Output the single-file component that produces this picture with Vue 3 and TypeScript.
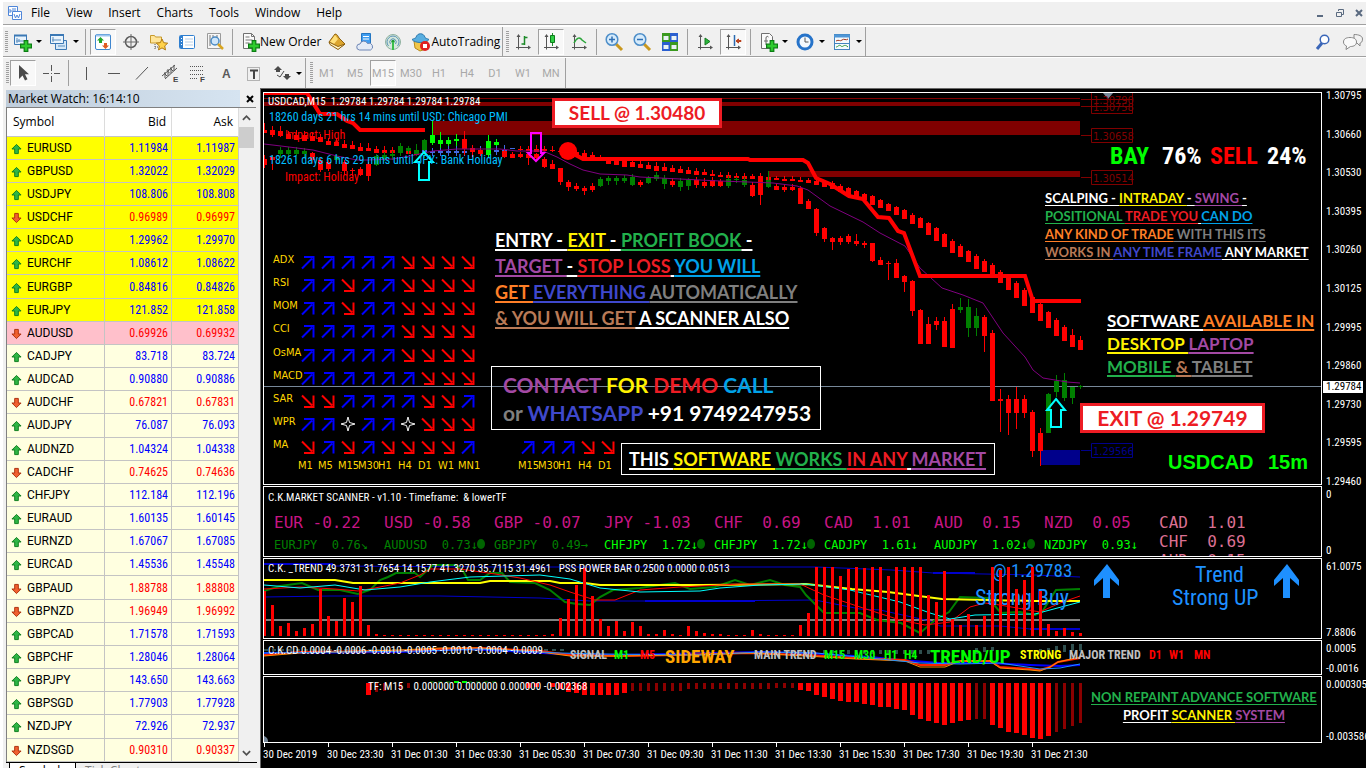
<script setup lang="ts">
type Seg = [string, string]
interface Tool { icon: string; label: string; drop?: boolean; on?: boolean; sep?: boolean; text?: string }

const menus = ['File', 'View', 'Insert', 'Charts', 'Tools', 'Window', 'Help']

const standard: Tool[] = [
  { icon: 'newchart', label: 'New chart', drop: true },
  { icon: 'profiles', label: 'Profiles', drop: true },
  { icon: 'watch', label: 'Market watch', on: true, sep: true },
  { icon: 'target', label: 'Data window' },
  { icon: 'favs', label: 'Navigator' },
  { icon: 'terminal', label: 'Terminal' },
  { icon: 'tester', label: 'Strategy tester' },
  { icon: 'order', label: 'New Order', text: 'New Order', sep: true },
  { icon: 'book', label: 'Editor' },
  { icon: 'cloud', label: 'Cloud' },
  { icon: 'signal', label: 'Signals' },
  { icon: 'auto', label: 'AutoTrading', text: 'AutoTrading' },
]
const charting: Tool[] = [
  { icon: 'bars', label: 'Bar chart' },
  { icon: 'candles', label: 'Candlesticks', on: true },
  { icon: 'line', label: 'Line chart' },
  { icon: 'zoomin', label: 'Zoom in', sep: true },
  { icon: 'zoomout', label: 'Zoom out' },
  { icon: 'tile', label: 'Tile windows' },
  { icon: 'scroll', label: 'Auto scroll', sep: true },
  { icon: 'shift', label: 'Chart shift', on: true },
  { icon: 'indicator', label: 'Indicators', drop: true, sep: true },
  { icon: 'clock', label: 'Periods', drop: true },
  { icon: 'template', label: 'Templates', drop: true },
]
const drawing: Tool[] = [
  { icon: 'cursor', label: 'Cursor', on: true },
  { icon: 'cross', label: 'Crosshair' },
  { icon: 'vline', label: 'Vertical line', sep: true },
  { icon: 'hline', label: 'Horizontal line' },
  { icon: 'trend', label: 'Trendline' },
  { icon: 'channel', label: 'Equidistant channel' },
  { icon: 'fibo', label: 'Fibonacci' },
  { icon: 'text', label: 'Text' },
  { icon: 'label', label: 'Text label' },
  { icon: 'shapes', label: 'Arrows', drop: true },
]
const frames = ['M1', 'M5', 'M15', 'M30', 'H1', 'H4', 'D1', 'W1', 'MN']

const quotes = `EURUSD 1.11984 1.11987 u
GBPUSD 1.32022 1.32029 u
USDJPY 108.806 108.808 u
USDCHF 0.96989 0.96997 d
USDCAD 1.29962 1.29970 u
EURCHF 1.08612 1.08622 u
EURGBP 0.84816 0.84826 u
EURJPY 121.852 121.858 u
AUDUSD 0.69926 0.69932 d
CADJPY 83.718 83.724 u
AUDCAD 0.90880 0.90886 u
AUDCHF 0.67821 0.67831 d
AUDJPY 76.087 76.093 u
AUDNZD 1.04324 1.04338 u
CADCHF 0.74625 0.74636 d
CHFJPY 112.184 112.196 u
EURAUD 1.60135 1.60145 u
EURNZD 1.67067 1.67085 u
EURCAD 1.45536 1.45548 u
GBPAUD 1.88788 1.88808 d
GBPNZD 1.96949 1.96992 d
GBPCAD 1.71578 1.71593 u
GBPCHF 1.28046 1.28064 u
GBPJPY 143.650 143.663 u
GBPSGD 1.77903 1.77928 u
NZDJPY 72.926 72.937 u
NZDSGD 0.90310 0.90337 d`.split('\n').map((r, i) => {
  const [symbol, bid, ask, dir] = r.split(' ')
  return { symbol, bid, ask, dir, tone: i < 8 ? 'hot' : i === 8 ? 'pink' : 'calm' }
})

const X0 = 264
const STEP = 8
const tint: Record<string, string> = { r: '#ff0000', g: '#008000', l: '#00ff00', b: '#4169e1' }

function candles(src: string) {
  return src.trim().split(/\s+/).map((s, k) => {
    const [hi, top, bot, lo] = s.slice(1).split(',').map(Number)
    return { x: X0 + k * STEP, hi, top, bot, lo, fill: tint[s[0]] }
  })
}

const upper = candles(`
r123,130,133,133 r126,130,135,137 r126,131,136,137 r131,134,139,139 r130,135,140,140 r131,135,141,141
r133,136,141,141 r134,137,142,142 r138,141,145,145 r138,142,146,146 r140,144,148,148 r141,145,149,149
r143,147,151,151 r143,148,151,151 r146,149,153,153 r146,150,153,153 r147,150,153,153 r147,150,153,153
r147,151,154,154 r147,151,155,155 b146,150,152,156 b148,151,153,156 b145,151,153,156 b145,151,153,156
b145,151,153,156 b145,151,153,156 b145,151,152,156 b146,151,152,156 b147,151,152,155 b145,150,152,155
b145,150,152,155 b148,148,149,149 r146,149,150,151 r146,149,151,151 r145,149,152,152 r146,149,151,151
r146,150,151,152 r150,151,152,152 r150,151,153,153 r150,152,155,155 r150,153,157,157 r152,155,158,158
r155,157,159,160 r158,160,164,164 r158,161,165,165 r159,161,167,167 r159,162,167,167 r161,164,168,168
r162,165,169,169 r162,166,171,171 r163,167,171,171 r165,168,172,172 r166,169,173,173 r167,170,174,174
r168,171,175,175 r169,172,175,175 r170,174,176,176 r172,175,177,177 r172,175,178,178 r173,176,178,178
r173,176,179,179 r174,176,179,179 r174,176,180,180 r174,177,180,180 r176,178,180,180 r176,179,181,181
r176,179,181,181 r177,180,182,182 r178,180,183,183 r179,181,185,185 r180,182,187,187 r181,183,189,189
r184,186,192,192 r187,188,195,195 r190,191,197,197 r193,194,200,200 r195,196,205,205 r199,200,208,208
r203,204,211,211 r206,207,215,215 r209,210,219,219 r213,215,224,224 r217,218,228,228 r222,223,235,235
r227,228,241,241 r233,234,247,247 r239,241,253,253 r244,246,257,257 r250,251,262,262 r254,256,269,269
r259,261,272,272 r263,265,275,275 r270,272,283,283 r276,277,290,290 r281,283,298,298 r288,290,306,306
r296,297,313,313 r303,304,321,321 r311,312,328,328 r318,320,336,336 r325,327,341,341 r329,335,347,347
r336,340,350,350`)

const lower = candles(`
r155,159,165,168 r155,157,160,170 g147,150,154,158 g147,150,154,157 g147,150,154,156 g148,151,154,158
r152,153,160,163 r158,160,170,172 r160,162,169,171 g155,156,160,162 r160,162,171,175 r168,170,171,176
r167,169,175,176 r162,164,176,181 g154,156,165,166 g152,155,159,161 g151,154,156,160 g143,146,153,156
g146,148,151,154 g144,150,154,156 g139,140,150,158 l120,135,143,145 l132,140,144,148 l137,140,144,146
l134,139,141,146 r131,139,149,155 r145,148,152,157 r148,150,154,156 l135,141,155,157 l139,142,145,146
r150,151,157,158 r152,154,158,158 r152,154,157,158 r152,154,158,165 r153,154,158,160 r157,159,167,168
r160,164,169,169 r168,168,182,185 r180,182,187,191 r183,186,189,191 r186,188,191,195 r183,186,190,192
g177,179,186,187 g176,178,181,185 g176,178,181,185 g175,178,181,183 g174,177,185,186 r180,182,185,187
g176,178,183,184 g172,175,179,181 g175,178,184,189 r178,181,185,187 g178,181,187,191 g178,180,186,190
r177,180,185,188 r178,182,186,188 r177,180,186,187 r179,181,186,187 g176,179,186,188 g177,179,180,183
g177,180,185,187 r182,185,196,197 r173,176,195,205 g171,180,187,188 r184,186,190,190 r184,187,190,192
r184,187,190,191 r186,188,204,204 r199,201,209,209 r208,209,233,236 r227,228,239,242 r237,238,242,250
r236,238,242,245 r234,236,242,244 r234,241,244,246 r241,243,245,248 r243,243,261,262 r257,260,265,265
r261,263,264,280 r259,263,278,278 r275,276,282,292 r280,281,311,316 r309,310,344,344 r317,324,344,344
r317,321,325,330 r317,321,347,347 r304,309,348,348 g298,307,310,313 g299,307,328,337 g308,316,328,336
r315,317,336,352 r330,333,401,401 r389,399,401,432 r395,399,413,435 r387,399,413,429 r395,399,413,418
r410,412,451,457 r428,433,451,466 g393,394,433,433 g375,381,392,397 g373,380,398,401 g387,387,398,404
g385,386,387,389`)

const priceMarks = ['1.30795', '1.30660', '1.30530', '1.30395', '1.30260', '1.30125', '1.29995', '1.29860', '1.29730', '1.29595', '1.29460']
const tags = [
  { y: 92, v: '1.30790', c: '#800000' },
  { y: 99, v: '1.30758', c: '#800000' },
  { y: 128, v: '1.30658', c: '#800000' },
  { y: 170, v: '1.30514', c: '#800000' },
  { y: 443, v: '1.29566', c: '#00008b' },
]
const titles = {
  price: 'USDCAD,M15  1.29784 1.29784 1.29784 1.29784',
  scanner: 'C.K.MARKET SCANNER - v1.10 - Timeframe:  & lowerTF',
  trend: 'C.K. _TREND 49.3731 31.7654 14.1577 41.3270 35.7115 31.4961   PSS POWER BAR 0.2500 0.0000 0.0513',
  cd: 'C.K.CD 0.0004 -0.0006 -0.0010 -0.0005 -0.0010 -0.0004 -0.0009',
  tf: 'TF: M15    0.000000 0.000000 0.000000 -0.002368',
}

const scan = [
  ['ADX', 'uuuuudddd'], ['RSI', 'uuduudddd'], ['MOM', 'uuduudddd'], ['CCI', 'uuuuudddd'], ['OsMA', 'uuuuudddd'],
  ['MACD', 'uuuuuuddd'], ['SAR', 'dduuuuddu'], ['WPR', 'uusuusddd'], ['MA', 'dududdddu'],
].map(([name, cells], i) => ({ name, cells: cells.split(''), y: 262 + Math.round((i * 185) / 8) }))
const scanFrames = ['M1', 'M5', 'M15', 'M30', 'H1', 'H4', 'D1', 'W1', 'MN1']
const miniFrames = [['M15', 'u'], ['M30', 'u'], ['H1', 'u'], ['H4', 'd'], ['D1', 'd']]

const C = { w: '#ffffff', y: '#fff200', g: '#22b14c', p: '#a349a4', r: '#ed1c24', s: '#00a2e8', o: '#ff7f27', b: '#3f48cc', k: '#7f7f7f', n: '#b97a57' }
const entry: Seg[][] = [
  [['ENTRY - ', C.w], ['EXIT ', C.y], ['- ', C.w], ['PROFIT BOOK', C.g], [' -', C.w]],
  [['TARGET ', C.p], ['- ', C.w], ['STOP LOSS', C.r], [' ', C.w], ['YOU WILL', C.s]],
  [['GET ', C.o], ['EVERYTHING ', C.b], ['AUTOMATICALLY', C.k]],
  [['& YOU WILL GET', C.n], [' A SCANNER ALSO', C.w]],
]
const contact: Seg[][] = [
  [['CONTACT ', C.p], ['FOR ', C.y], ['DEMO ', C.r], ['CALL', C.s]],
  [['or ', C.k], ['WHATSAPP ', C.b], ['+91 9749247953', C.w]],
]
const works: Seg[][] = [[['THIS ', C.w], ['SOFTWARE ', C.y], ['WORKS ', C.g], ['IN ANY', C.r], [' ', C.w], ['MARKET', C.p]]]
const scalping: Seg[][] = [
  [['SCALPING - ', C.w], ['INTRADAY ', C.y], ['- ', C.w], ['SWING ', C.p], ['-', C.w]],
  [['POSITIONAL ', C.g], ['TRADE YOU', C.r], [' ', C.w], ['CAN DO', C.s]],
  [['ANY KIND OF TRADE', C.o], [' WITH THIS ITS', C.k]],
  [['WORKS IN ', C.n], ['ANY TIME FRAME', C.b], [' ANY MARKET', C.w]],
]
const devices: Seg[][] = [
  [['SOFTWARE ', C.w], ['AVAILABLE IN', C.o]],
  [['DESKTOP ', C.y], ['LAPTOP', C.p]],
  [['MOBILE ', C.g], ['& ', C.n], ['TABLET', C.k]],
]
const advance: Seg[][] = [
  [['NON REPAINT ADVANCE SOFTWARE', C.g]],
  [['PROFIT ', C.w], ['SCANNER ', C.y], ['SYSTEM', C.p]],
]

const strength = [
  ['EUR -0.22', 'EURJPY  0.76↘', 0, 0], ['USD -0.58', 'AUDUSD  0.73↓', 0, 1], ['GBP -0.07', 'GBPJPY  0.49→', 0, 0],
  ['JPY -1.03', 'CHFJPY  1.72↓', 1, 1], ['CHF  0.69', 'CHFJPY  1.72↓', 1, 1], ['CAD  1.01', 'CADJPY  1.61↓', 1, 0],
  ['AUD  0.15', 'AUDJPY  1.02↓', 1, 1], ['NZD  0.05', 'NZDJPY  0.93↓', 1, 0],
].map(([a, b, on, dot], i) => ({ a, b, on, dot, x: 274 + i * 110 }))
const ranking = ['CAD  1.01', 'CHF  0.69', 'AUD  0.15']

const power = [
  591, 605, 626, 623, 631, 628, 624, 589, 616, 621, 598, 602, 586, 625, 634, 635, 635, 635, 635, 635, 635, 635, 635,
  635, 635, 635, 635, 635, 635, 635, 635, 635, 635, 635, 635, 635, 634, 618, 599, 585, 568, 596, 619, 626, 621, 631,
  622, 626, 634, 634, 630, 634, 635, 626, 631, 633, 634, 634, 635, 635, 635, 630, 634, 635, 635, 635, 635, 625, 613,
  567, 567, 567, 576, 569, 567, 568, 567, 567, 576, 567, 567, 567, 567, 595, 602, 571, 619, 625, 614, 625, 616, 567,
  570, 567, 589, 580, 567, 591, 624, 631, 628, 632, 633,
].map((top, k) => ({ x: X0 + k * STEP, top }))

const momentum = [
  ...Array.from({ length: 21 }, (_, i) => [46 + i, i < 7 ? 691 : i < 18 ? 689 : 688, 0]),
  [13, 695, 1], [14, 692, 0], [15, 691, 0], [17, 690, 0], [18, 688, 0], [33, 688, 1], [34, 687, 1], [36, 687, 1], [37, 689, 1],
  [38, 692, 1], [39, 693, 1], [40, 695, 1], [41, 695, 1], [42, 695, 1], [43, 695, 1], [44, 695, 1], [45, 693, 1], [67, 690, 1], [68, 691, 1],
  ...[695, 697, 699, 701, 702, 702, 704, 705, 707, 707, 709, 710, 715, 719, 721, 723, 725, 723, 721, 720, 719, 719, 725,
    728, 732, 733, 735, 738, 739, 736, 732, 729, 726, 723].map((b, i) => [69 + i, b, [89, 90, 99, 100, 101, 102].includes(69 + i) ? 0 : 1]),
].map(([k, b, on]) => ({ x: X0 + k * STEP, b, on }))

const slate = [66, 68, 70, 71, 72, 73, 74, 75, 76, 77, 78, 79, 80, 81, 82, 83].map(k => ({ x: X0 + k * STEP, y: 650, h: 4 }))
  .concat([[89, 648, 6], [90, 647, 5], [91, 647, 4], [97, 649, 4], [98, 648, 4], [99, 646, 6], [100, 645, 7], [101, 644, 7], [102, 644, 7]]
    .map(([k, y, h]) => ({ x: X0 + k * STEP, y, h })))

const signals: [string, number, string][] = [
  ['SIGNAL', 570, '#c0c0c0'], ['M1', 614, '#00ff00'], ['M5', 640, '#ff0000'], ['MAIN TREND', 754, '#c0c0c0'],
  ['M15', 824, '#00ff00'], ['M30', 854, '#00ff00'], ['H1', 884, '#00ff00'], ['H4', 904, '#00ff00'], ['STRONG', 1020, '#ffff00'],
  ['MAJOR TREND', 1069, '#c0c0c0'], ['D1', 1149, '#ff0000'], ['W1', 1169, '#ff0000'], ['MN', 1194, '#ff0000'],
]
const dates = ['30 Dec 2019', '30 Dec 23:30', ...Array.from({ length: 11 }, (_, i) => `31 Dec ${String(i * 2 + 1).padStart(2, '0')}:30`)]
</script>

<template>
  <svg class="defs" aria-hidden="true">
    <defs>
      <symbol id="i-plus" viewBox="0 0 10 10"><path d="M3.500 .5h3v3h3v3h-3v3h-3v-3h-3v-3h3z" fill="#2ecc2e" stroke="#0a7d12" /></symbol>
      <symbol id="i-newchart" viewBox="0 0 20 20"><path d="M2.500 3.500h12v9h-12z" fill="#e8f3fc" stroke="#3b78b5" /><path d="M2 3.500h13" stroke="#3b78b5" stroke-width="2" /><path d="M5 6v5M4 9h8M7 7v3" stroke="#5a8dbd" fill="none" /><use href="#i-plus" x="8" y="8" width="12" height="12" /></symbol>
      <symbol id="i-profiles" viewBox="0 0 20 20"><path d="M6.500 8.500h11v9h-11z" fill="#d5e8f8" stroke="#3b78b5" /><path d="M1.500 2.500h13v9h-13z" fill="#eaf4fc" stroke="#3b78b5" /><path d="M1 3h14" stroke="#3b78b5" stroke-width="2" /><path d="M4 5v5M3 8h9M9 14h7" stroke="#5a8dbd" /></symbol>
      <symbol id="i-watch" viewBox="0 0 20 20"><rect x="2.500" y="2.500" width="15" height="15" rx="1.500" fill="#fff" stroke="#3f86cf" /><path d="M3 3.500h14" stroke="#9cc6ee" stroke-width="2" /><path d="M7.500 5l3.500 3.500H9V11H6V8.500H4z" fill="#22a52c" /><path d="M12.500 17L9 13.500h2V11h3v2.500h2z" fill="#e05a22" /></symbol>
      <symbol id="i-target" viewBox="0 0 20 20"><circle cx="10" cy="10" r="5.500" fill="none" stroke="#5a5a5a" stroke-width="1.500" /><path d="M10 2v16M2 10h16" stroke="#6a6a6a" /></symbol>
      <symbol id="i-favs" viewBox="0 0 20 20"><path d="M1.500 3.500h4l1 1.500h6v6h-11z" fill="#ffe59a" stroke="#c79a2c" /><path d="M6 12v6M6 15h4" stroke="#555" stroke-dasharray="1 1" /><path d="M13 7l1.700 3.700 4 .5-3 2.700.8 4-3.500-2-3.500 2 .8-4-3-2.700 4-.5z" fill="#ffd24a" stroke="#b07a12" /></symbol>
      <symbol id="i-terminal" viewBox="0 0 20 20"><rect x="2.500" y="3.500" width="15" height="13" rx="1" fill="#fff" stroke="#2f7fd0" /><path d="M3 4v12h3V4z" fill="#2f7fd0" /><path d="M8 7h8M8 10h8M8 13h8" stroke="#b9cfe6" /><path d="M4.500 6v1M4.500 9v1M4.500 12v1" stroke="#fff" /></symbol>
      <symbol id="i-tester" viewBox="0 0 20 20"><path d="M2.500 1.500h13v15h-13z" fill="#f6f6f6" stroke="#9a9a9a" /><path d="M5 3v11M8 3v6M12 3v4" stroke="#777" /><circle cx="10" cy="9" r="4" fill="#cfe6fa" stroke="#4a8ac4" stroke-width="1.500" /><path d="M13 12l5 5" stroke="#d9a520" stroke-width="2.500" /></symbol>
      <symbol id="i-order" viewBox="0 0 20 20"><path d="M3.500 1.500h8l3 3v12h-11z" fill="#fafafa" stroke="#707070" /><path d="M11.500 1.500v3h3M5.500 5h4M5.500 8h7M5.500 11h4" stroke="#777" fill="none" /><use href="#i-plus" x="8" y="8" width="12" height="12" /></symbol>
      <symbol id="i-book" viewBox="0 0 20 20"><path d="M2 10l6-8c2 0 3 2 4 4l6 6-7 5z" fill="#dca52e" stroke="#8f6210" /><path d="M3 10l5-7c1 1 2 3 3 4l-4 5z" fill="#ffe07a" /><path d="M2 10l1 2.500 8 5 7-5.500-7 2.500z" fill="#fff3c4" stroke="#8f6210" /></symbol>
      <symbol id="i-cloud" viewBox="0 0 20 20"><path d="M6.500 1.500h9v11h-9z" fill="#3f9df0" stroke="#2476c2" /><path d="M8 4.500h6M8 7h6" stroke="#fff" /><path d="M4.500 18a3 3 0 0 1 .5-6 4 4 0 0 1 7.500-.5 3.300 3.300 0 0 1 3 6.500z" fill="#e4ebf6" stroke="#6e86b5" /></symbol>
      <symbol id="i-signal" viewBox="0 0 20 20"><circle cx="10" cy="10" r="7.500" fill="#d6e8dc" stroke="#8fb1a0" /><path d="M5.500 14a6 6 0 1 1 9 0M7.500 12a3.200 3.200 0 1 1 5 0" fill="none" stroke="#5b93b8" /><circle cx="10" cy="9.500" r="1.700" fill="#1f9a35" /><path d="M10 10v8" stroke="#3bbf4b" stroke-width="2" /></symbol>
      <symbol id="i-auto" viewBox="0 0 20 20"><path d="M3 9h13l-1 8-6 2-5-3z" fill="#f2c648" stroke="#b98a1c" /><path d="M1 7.500c2-1 3-1 4-2 1-5 8-5 9 0 1 1 2 1 4 2-3 4-14 4-17 0z" fill="#58aee0" stroke="#2b78ad" /><circle cx="14" cy="14" r="5" fill="#e02020" /><rect x="12" y="12" width="4" height="4" fill="#fff" /></symbol>
      <symbol id="i-axes" viewBox="0 0 20 20"><path d="M5.500 3v14.500M3 15.500h14" stroke="#555" fill="none" /><path d="M5.500 2l-2 3h4zM18 15.500l-3-2v4z" fill="#555" /></symbol>
      <symbol id="i-bars" viewBox="0 0 20 20"><use href="#i-axes" /><path d="M11.500 4v9M11.500 5.500h3M8.500 12h3" stroke="#1c8a28" stroke-width="1.500" /></symbol>
      <symbol id="i-candles" viewBox="0 0 20 20"><use href="#i-axes" /><path d="M11.500 1v13" stroke="#1c8a28" /><path d="M9.500 3.500h4v7h-4z" fill="#2fd045" stroke="#0e7a1b" /></symbol>
      <symbol id="i-line" viewBox="0 0 20 20"><use href="#i-axes" /><path d="M5 11c3-6 6-6 8-3l4 3" fill="none" stroke="#2ba53a" stroke-width="1.500" /></symbol>
      <symbol id="i-lens" viewBox="0 0 20 20"><path d="M12 12l6 6" stroke="#c9981e" stroke-width="3" /><circle cx="8" cy="7.500" r="5.800" fill="#d6ebfb" stroke="#4e8ec9" stroke-width="1.500" /></symbol>
      <symbol id="i-zoomin" viewBox="0 0 20 20"><use href="#i-lens" /><path d="M8 4.500v6M5 7.500h6" stroke="#2f6fb4" stroke-width="1.500" /></symbol>
      <symbol id="i-zoomout" viewBox="0 0 20 20"><use href="#i-lens" /><path d="M5 7.500h6" stroke="#2f6fb4" stroke-width="1.500" /></symbol>
      <symbol id="i-tile" viewBox="0 0 20 20"><path d="M2 1h8v9H2zM10 10h8v9h-8z" fill="#3a9a1e" /><path d="M10 1h8v9h-8zM2 10h8v9H2z" fill="#2a5fd0" /><path d="M3.500 4h5v4h-5zM11.500 4h5v4h-5zM3.500 13h5v4h-5zM11.500 13h5v4h-5z" fill="#e9f2f4" /></symbol>
      <symbol id="i-scroll" viewBox="0 0 20 20"><use href="#i-axes" /><path d="M10 6l5 3.500-5 3.500z" fill="#2bb53b" stroke="#167a22" /></symbol>
      <symbol id="i-shift" viewBox="0 0 20 20"><use href="#i-axes" /><path d="M11.500 3v11" stroke="#2b6ab0" stroke-width="1.500" /><path d="M13 9l2.500-2v1.500H18v1h-2.500V11z" fill="#b8401c" stroke="#b8401c" /></symbol>
      <symbol id="i-indicator" viewBox="0 0 20 20"><path d="M3.500 1.500h8l3 3v12h-11z" fill="#fafafa" stroke="#707070" /><path d="M8 13V6c0-2 2-2 2.500-1M6 9h4" stroke="#666" fill="none" /><use href="#i-plus" x="8" y="8" width="12" height="12" /></symbol>
      <symbol id="i-clock" viewBox="0 0 20 20"><circle cx="10" cy="10" r="7" fill="#f3f8fd" stroke="#2673c9" stroke-width="3" /><path d="M10 5.500V10h3.500" stroke="#555" fill="none" /></symbol>
      <symbol id="i-template" viewBox="0 0 20 20"><rect x="2.500" y="2.500" width="15" height="15" fill="#f5fafd" stroke="#4384bd" /><path d="M2 4h16" stroke="#4f96d6" stroke-width="3" /><path d="M4 9c3-2 4 1 6-1s4 1 6-1" stroke="#a0351c" fill="none" /><path d="M4 15c2 0 3-3 5-1s3-3 7 1" stroke="#2a9a35" fill="none" /><path d="M3 11.500h14" stroke="#4384bd" /></symbol>
      <symbol id="i-cursor" viewBox="0 0 20 20"><path d="M6 2v14l3.500-3.500 2.500 5 2.500-1.200-2.500-5H16z" fill="#4a4a4a" /></symbol>
      <symbol id="i-cross" viewBox="0 0 20 20"><path d="M10.500 2v6M10.500 13v6M2 10.500h6M13 10.500h6" stroke="#555" /><path d="M10 10h1v1h-1z" fill="#555" /></symbol>
      <symbol id="i-vline" viewBox="0 0 20 20"><path d="M10.500 4v13" stroke="#555" /></symbol>
      <symbol id="i-hline" viewBox="0 0 20 20"><path d="M4 10.500h12" stroke="#555" /></symbol>
      <symbol id="i-trend" viewBox="0 0 20 20"><path d="M4 16.500L16 4" stroke="#555" /></symbol>
      <symbol id="i-channel" viewBox="0 0 20 20"><path d="M2 13L15 2M5 16L17 5M4 10l3 3M7 7.500l3 3M10 5l3 3M5 9v6M8 6v7M11 4v6M14 2v6" stroke="#555" /><text x="13" y="19" font-size="8" font-weight="700" fill="#444">E</text></symbol>
      <symbol id="i-fibo" viewBox="0 0 20 20"><path d="M2 3.500h14M2 7.500h14M2 11.500h14M2 15.500h8" stroke="#555" stroke-dasharray="1 1" /><text x="12" y="19" font-size="8" font-weight="700" fill="#444">F</text></symbol>
      <symbol id="i-text" viewBox="0 0 20 20"><text x="6" y="15" font-size="12" font-weight="700" fill="#5a5a5a">A</text></symbol>
      <symbol id="i-label" viewBox="0 0 20 20"><rect x="3.500" y="4.500" width="12" height="13" fill="none" stroke="#777" stroke-dasharray="1 1" /><path d="M6 7.500h8M10 7.500V16" stroke="#444" stroke-width="2" /></symbol>
      <symbol id="i-shapes" viewBox="0 0 20 20"><path d="M6 3l4 4H8v2H4V7H2zM15 17l-4-4h2v-2h4v2h2z" fill="#4a4a4a" /><path d="M5 12l3 2 4-6" stroke="#4a4a4a" fill="none" /></symbol>
      <symbol id="i-up" viewBox="0 0 12 12"><path d="M6 1l5 5H8v5H4V6H1z" fill="#2fb545" stroke="#0a7a1a" /></symbol>
      <symbol id="i-down" viewBox="0 0 12 12"><path d="M6 11L1 6h3V1h4v5h3z" fill="#f06030" stroke="#a82a08" /></symbol>
      <symbol id="a-u" viewBox="0 0 14 14"><path d="M1 13L11 3M3 1.500h9.500V13" fill="none" stroke="#0000ff" stroke-width="2" /></symbol>
      <symbol id="a-d" viewBox="0 0 14 14"><path d="M1 1L11 11M3 12.500h9.500V1" fill="none" stroke="#ff0000" stroke-width="2" /></symbol>
      <symbol id="a-s" viewBox="0 0 16 16"><path d="M8 1l1.500 5.500L15 8l-5.500 1.500L8 15l-1.500-5.500L1 8l5.500-1.500z" fill="#000" stroke="#f5f5f5" /></symbol>
    </defs>
  </svg>

  <div class="terminal">
    <header>
      <nav class="menubar">
        <svg class="logo" viewBox="0 0 16 16"><path d="M1.500 1.500h9v9h-9z" fill="#fff" stroke="#4f86d9" /><path d="M5.500 6.500h9v8h-9z" fill="#fff" stroke="#4f86d9" /><path d="M3 4v4M3 6h2M6 3v3M8 3v3M7 9l1.500 4L10 10l1.500 3L13 9" fill="none" stroke="#4f86d9" /></svg>
        <button v-for="m in menus" :key="m" type="button">{{ m }}</button>
        <span class="winctl">
          <button type="button" aria-label="Minimize"><svg viewBox="0 0 10 10"><path d="M1 8h6" stroke="#5a6a80" stroke-width="2" /></svg></button>
          <button type="button" aria-label="Restore"><svg viewBox="0 0 10 10"><path d="M3.500 3V1.500h5v5H7M1.500 4.500h5v4h-5z" fill="none" stroke="#5a6a80" /></svg></button>
          <button type="button" aria-label="Close"><svg viewBox="0 0 10 10"><path d="M2 2l6 6M8 2L2 8" stroke="#5a6a80" stroke-width="2" /></svg></button>
        </span>
      </nav>

      <div class="bars">
        <div v-for="(bar, b) in [standard, charting]" :key="b" class="bar">
          <i class="grip" />
          <template v-for="t in bar" :key="t.icon">
            <i v-if="t.sep" class="sep" />
            <button type="button" class="tool" :class="{ on: t.on, drop: t.drop, wide: t.text }" :aria-label="t.label">
              <svg class="ico"><use :href="'#i-' + t.icon" /></svg>
              <span v-if="t.text">{{ t.text }}</span>
              <i v-if="t.drop" class="caret" />
            </button>
          </template>
        </div>
        <div class="far">
          <svg viewBox="0 0 18 18"><path d="M8 10l-5 6" stroke="#3a66b8" stroke-width="3" /><circle cx="10.500" cy="6.500" r="4.300" fill="#fff" stroke="#3a66b8" stroke-width="1.500" /></svg>
          <svg viewBox="0 0 22 18"><path d="M12 1.500c5 0 8.500 1.500 8.500 4.500S19 10 18 10v3l-3-3H12z" fill="#f2f2f2" stroke="#888" /><path d="M8 4.500c4 0 6.500 1.500 6.500 4.500s-2.500 4.500-6 4.500L4 16.500l.5-3.500C2.500 12 1.500 11 1.500 9c0-3 2.500-4.500 6.500-4.500z" fill="#fafafa" stroke="#888" /></svg>
        </div>
      </div>

      <div class="bars second">
        <div class="bar">
          <i class="grip" />
          <template v-for="t in drawing" :key="t.icon">
            <i v-if="t.sep" class="sep" />
            <button type="button" class="tool" :class="{ on: t.on, drop: t.drop }" :aria-label="t.label">
              <svg class="ico"><use :href="'#i-' + t.icon" /></svg>
              <i v-if="t.drop" class="caret" />
            </button>
          </template>
        </div>
        <div class="bar">
          <i class="grip" />
          <button v-for="f in frames" :key="f" type="button" class="tool frame" :class="{ on: f === 'M15' }">{{ f }}</button>
        </div>
      </div>
    </header>

    <main>
      <aside class="watch">
        <div class="title"><span>Market Watch: 16:14:10</span><button type="button" aria-label="Close panel"><svg viewBox="0 0 8 8"><path d="M1 1l6 6M7 1L1 7" stroke="#000" stroke-width="2" /></svg></button></div>
        <div class="list">
          <table>
            <thead><tr><th class="sym">Symbol</th><th>Bid</th><th>Ask</th></tr></thead>
            <tbody>
              <tr v-for="q in quotes" :key="q.symbol" :class="[q.tone, q.dir]">
                <td class="sym"><svg class="dir"><use :href="q.dir === 'u' ? '#i-up' : '#i-down'" /></svg>{{ q.symbol }}</td>
                <td>{{ q.bid }}</td>
                <td>{{ q.ask }}</td>
              </tr>
            </tbody>
          </table>
          <div class="scroll">
            <svg viewBox="0 0 10 8"><path d="M1 6l4-4 4 4" fill="none" stroke="#505050" stroke-width="2" /></svg>
            <i class="thumb" />
            <svg class="end" viewBox="0 0 10 8"><path d="M1 2l4 4 4-4" fill="none" stroke="#505050" stroke-width="2" /></svg>
          </div>
        </div>
        <div class="tabs"><button type="button" class="act">Symbols</button><button type="button">Tick Chart</button></div>
      </aside>

      <section class="chart">
        <div class="pane price">
          <div class="plot">
            <svg width="1057" height="391" viewBox="264 93 1057 391">
              <g fill="#800000">
                <rect x="264" y="98" width="816" height="1" /><rect x="264" y="102" width="816" height="4" />
                <rect x="432" y="121" width="648" height="14" /><rect x="769" y="171" width="311" height="6" />
              </g>
              <rect x="1041" y="450" width="39" height="15" fill="#00008b" />
              <rect x="264" y="386" width="1057" height="1" fill="#778899" />
              <g v-for="(set, s) in [upper, lower]" :key="s" shape-rendering="crispEdges">
                <g v-for="c in set" :key="c.x" :fill="c.fill">
                  <rect :x="c.x" :y="c.hi" width="1" :height="c.lo - c.hi" />
                  <rect :x="c.x - 2" :y="c.top" width="5" :height="Math.max(1, c.bot - c.top)" />
                </g>
              </g>
              <polyline points="264,144 281,146 297,148 313,150 337,156 357,160 367,160 393,159 410,156 433,151 457,149 500,149 517,151 543,151 557,157 570,164 583,170 600,174 627,175 640,177 720,181 748,182 773,183 797,186 808,190 830,206 863,222 880,233 905,246 920,268 942,288 963,295 983,303 1003,333 1025,357 1033,370 1043,378 1067,382 1080,383" class="ma" />
              <g class="trail">
                <polyline points="264,93 307,93 320,114 337,114 347,121 353,123 360,130 425,130" />
                <polyline points="568,151 583,159 748,159 750,160 803,160 808,163 816,178 830,184 849,196 863,199 878,217 889,218 898,231 904,233 920,276 1025,276 1033,301 1081,301" />
              </g>
              <circle cx="568" cy="151" r="9" fill="#ff0000" />
              <g fill="none" stroke="#00ffff" stroke-width="2">
                <path d="M424 152l9 10h-4v18h-10v-18h-4z" /><path d="M1056 399l9 11h-4v17h-10v-17h-4z" />
              </g>
              <path d="M531 133h10v20h3l-8 8-8-8h3z" fill="none" stroke="#ff00ff" stroke-width="2" />
              <path d="M1103 93h10l-5 6z" fill="#778899" />
              <g v-for="t in tags" :key="t.v">
                <path :d="`M1081 ${t.y + 7}.5h10M1091.500 ${t.y}.500h41v14h-41z`" fill="none" :stroke="t.c" />
                <text class="tag" x="1093" :y="t.y + 12" :fill="t.c">{{ t.v }}</text>
              </g>
              <text class="cap" x="268" y="105">{{ titles.price }}</text>
              <g class="news">
                <text x="269" y="121" fill="#00bfff">18260 days 21 hrs 14 mins until USD: Chicago PMI</text>
                <text x="285" y="139" fill="#ff0000">Impact: High</text>
                <text x="269" y="164" fill="#00bfff">18261 days 6 hrs 29 mins until JPY: Bank Holiday</text>
                <text x="285" y="181" fill="#ff0000">Impact: Holiday</text>
              </g>
              <g v-for="row in scan" :key="row.name">
                <text class="scan" x="273" :y="row.y + 1">{{ row.name }}</text>
                <use v-for="(c, i) in row.cells" :key="i" :href="'#a-' + c" :x="(c === 's' ? 340 : 301) + (c === 's' ? (i - 2) * 20 : i * 20)" :y="row.y - (c === 's' ? 8 : 7)" :width="c === 's' ? 16 : 14" :height="c === 's' ? 16 : 15" />
              </g>
              <text v-for="(f, i) in scanFrames" :key="f" class="scan" :x="298 + i * 20" y="469">{{ f }}</text>
              <g v-for="([f, d], i) in miniFrames" :key="f">
                <use :href="'#a-' + d" :x="521 + i * 20" y="440" width="14" height="15" />
                <text class="scan" :x="518 + i * 20" y="469">{{ f }}</text>
              </g>
              <g class="ratio">
                <text x="1110" y="164" fill="#00ff00">BAY</text><text x="1162" y="164" fill="#fff">76%</text>
                <text x="1210" y="164" fill="#ff0000">SELL</text><text x="1267" y="164" fill="#fff">24%</text>
              </g>
              <g class="pair"><text x="1168" y="469">USDCAD</text><text x="1268" y="469">15m</text></g>
            </svg>
            <div class="stamp sell">SELL @ 1.30480</div>
            <div class="stamp exit">EXIT @ 1.29749</div>
            <div v-for="(block, n) in { entry, contact, works, scalping, devices }" :key="n" class="note" :class="n">
              <p v-for="(line, i) in block" :key="i"><span v-for="(s, j) in line" :key="j" :style="{ color: s[1] }">{{ s[0] }}</span></p>
            </div>
          </div>
          <div class="axis"><span v-for="p in priceMarks" :key="p">{{ p }}</span><b>1.29784</b></div>
        </div>

        <div class="pane scanner">
          <div class="plot">
            <svg width="1057" height="69" viewBox="264 487 1057 69">
              <text class="cap" x="268" y="501">{{ titles.scanner }}</text>
              <g v-for="s in strength" :key="s.x" class="mono">
                <text :x="s.x" y="528" font-size="16" fill="#c71585">{{ s.a }}</text>
                <text :x="s.x" y="549" font-size="12" :fill="s.on ? '#00ff00' : '#008000'">{{ s.b }}</text>
                <ellipse v-if="s.dot" :cx="s.x + 97" cy="544" rx="4" ry="5" fill="#006400" />
              </g>
              <text v-for="(r, i) in ranking" :key="r" class="mono" x="1159" :y="528 + i * 19" font-size="16" fill="#db7093">{{ r }}</text>
            </svg>
          </div>
          <div class="axis"><span>0</span><span>0</span></div>
        </div>

        <div class="pane trend">
          <div class="plot">
            <svg width="1057" height="79" viewBox="264 559 1057 79">
              <rect x="264" y="619" width="816" height="2" fill="#808080" />
              <g class="curve">
                <polyline stroke="#0000cd" points="264,564 333,564 333,566 500,567 816,567 892,570 933,573 1035,575 1080,577" />
                <polyline stroke="#0000cd" points="264,597 330,596 440,596 540,598 590,601 700,601 815,600 830,603 860,609 880,610 930,621 940,626 1000,626 1030,629 1080,629" />
                <polyline class="thick" stroke="#0000cd" points="264,564 333,564" />
                <polyline class="thick" stroke="#0000cd" points="933,573 975,573" />
                <polyline class="thick" stroke="#0000cd" points="645,601 755,601" />
                <polyline class="thick" stroke="#0000cd" points="1030,629 1080,629" />
                <polyline class="thick" stroke="#008000" points="264,591 280,586 302,583 318,590 340,590 358,594 370,590 380,580 388,577 396,573 415,573 420,577 433,565 455,565 463,571 468,580 480,580 490,573 502,573 510,582 535,583 550,590 565,602 577,604 590,605 600,597 613,590 640,588 660,585 675,583 690,589 715,587 735,580 750,585 770,580 785,585 800,587 806,595 824,613 860,613 877,620 901,623 920,633 935,620 949,612 960,597 988,598 1001,613 1020,612 1035,615 1042,612 1056,590 1080,589" />
                <polyline class="thick" stroke="#ffff00" points="264,580 335,580 353,583 480,583 490,581 550,581 560,583 585,583 600,585 700,585 806,584 852,589 888,592 942,599 1035,601 1080,601" />
                <polyline stroke="#ff0000" points="264,589 300,587 335,589 358,591 380,587 400,583 420,575 430,569 460,569 495,574 520,578 550,585 570,592 595,600 615,600 640,590 680,587 740,584 800,584 824,595 860,607 900,620 925,625 950,622 970,607 985,603 1000,605 1040,612 1060,603 1080,596" />
                <polyline stroke="#00ffff" points="264,585 300,588 335,585 365,590 400,587 430,582 470,577 540,575 570,579 600,588 640,592 700,591 720,588 760,585 806,584 850,590 900,602 930,613 950,619 975,615 1035,614 1080,602" />
              </g>
              <g class="verdict">
                <text class="quote" x="992" y="577">@ 1.29783</text><text x="975" y="605">Strong Buy</text>
                <text x="1195" y="582">Trend</text><text x="1172" y="605">Strong UP</text>
                <path d="M1107 564l12 16v6l-9-8v20h-7v-20l-9 8v-6zM1287 564l12 16v6l-9-8v20h-7v-20l-9 8v-6z" />
              </g>
              <rect v-for="p in power" :key="p.x" :x="p.x - 1" :y="p.top" width="3" :height="636 - p.top" fill="#ff0000" />
              <text class="cap" x="268" y="572">{{ titles.trend }}</text>
            </svg>
          </div>
          <div class="axis"><span>61.0075</span><span>7.8806</span></div>
        </div>

        <div class="pane cd">
          <div class="plot">
            <svg width="1057" height="33" viewBox="264 641 1057 33">
              <path d="M264 650h300" stroke="#2f4f4f" stroke-width="2" stroke-dasharray="4 4" />
              <rect v-for="s in slate" :key="s.x" :x="s.x - 1" :y="s.y" width="3" :height="s.h" fill="#2f4f4f" />
              <g class="curve">
                <polyline class="thick" stroke="#0000ff" points="264,653 400,652 470,649 560,654 620,655 760,652 806,653 870,657 900,660 940,663 990,663 1030,665 1060,666 1080,665" />
                <polyline class="thick" stroke="#ff2200" points="264,655 300,652 400,651 440,649 480,648 540,651 570,655 620,656 680,655 750,653 806,655 856,658 905,660 920,665 945,665 960,661 990,661 1000,667 1030,669 1040,670 1050,667 1058,662 1080,658" />
                <polyline stroke="#ff8c00" points="264,656 300,653 400,650 440,648 480,648 540,652 570,656 620,656 680,655 750,653 806,656 856,659 905,661 920,667 945,667 960,661 990,661 1000,668 1030,670 1040,671 1050,667 1058,662 1080,657" />
                <polyline stroke="#1e90ff" points="264,653 420,651 480,649 560,653 600,654 700,655 760,652 816,653 880,659 920,663 960,664 1000,663 1040,669 1060,668 1080,664" />
              </g>
              <text class="cap" x="268" y="654">{{ titles.cd }}</text>
              <g class="sig">
                <text v-for="s in signals" :key="s[0]" :x="s[1]" y="659" :fill="s[2]">{{ s[0] }}</text>
                <text class="big" x="665" y="663" fill="#ffa500">SIDEWAY</text><text class="big" x="930" y="663" fill="#00ff00">TREND/UP</text>
              </g>
            </svg>
          </div>
          <div class="axis"><span>0.0005</span><span>-0.0016</span></div>
        </div>

        <div class="pane tf">
          <div class="plot">
            <svg width="1057" height="65" viewBox="264 677 1057 65">
              <rect v-for="m in momentum" :key="m.x" :x="m.x - (m.on ? 2 : 1)" y="683" :width="m.on ? 5 : 3" :height="m.b - 683" :fill="m.on ? '#ff0000' : '#8b0000'" />
              <path d="M430 682h22M468 682h30" stroke="#008000" stroke-width="1" stroke-dasharray="4 4" /><path d="M454 682h5M462 682h5" stroke="#00ff00" stroke-width="2" />
              <path d="M264 736a6 6 0 0 1 4 6h-4z" fill="#778899" />
              <text class="cap" x="368" y="690">{{ titles.tf }}</text>
            </svg>
            <div class="note advance">
              <p v-for="(line, i) in advance" :key="i"><span v-for="(s, j) in line" :key="j" :style="{ color: s[1] }">{{ s[0] }}</span></p>
            </div>
          </div>
          <div class="axis"><span>0.000305</span><span>-0.003586</span></div>
        </div>

        <div class="dates"><span v-for="d in dates" :key="d">{{ d }}</span></div>
      </section>
    </main>
  </div>
</template>

<style>
body { margin: 0; background: #fff; }
</style>

<style scoped>
.defs { position: absolute; width: 0; height: 0; }
.terminal { --narrow: "Liberation Sans Narrow", "Roboto Condensed", Roboto, sans-serif; height: 100vh; box-sizing: border-box; padding: 2px 0 0 3px; display: flex; flex-direction: column; overflow: hidden; background: #fff; color: #000; font: 12px/16px "Open Sans", "Noto Sans", sans-serif; }
button { border: 0; background: none; padding: 0; margin: 0; font: inherit; color: inherit; }
.menubar { display: flex; align-items: center; height: 22px; background: #f0f0f0; border-bottom: 1px solid #a0a0a0; padding-left: 4px; }
.logo { width: 16px; height: 16px; }
.menubar > button { padding: 0 8px; font-size: 12px; }
.winctl { margin-left: auto; display: flex; gap: 9px; padding-right: 2px; }
.winctl button { display: flex; }
.winctl svg { width: 10px; height: 10px; }
.bars { display: flex; height: 29px; margin-top: 2px; background: #f0f0f0; border-bottom: 1px solid #a0a0a0; }
.bars.second { margin-top: 1px; height: 30px; border-bottom: 0; }
.bar { display: flex; align-items: center; padding-left: 2px; border-right: 1px solid #a0a0a0; margin-right: 1px; }
.second .bar { padding-left: 3px; }
.grip { width: 3px; height: 22px; background: repeating-linear-gradient(#a0a0a0 0 1px, #f0f0f0 1px 2px); }
.sep { width: 7px; height: 26px; background: linear-gradient(90deg, #f0f0f0 3px, #a0a0a0 3px 4px, #f0f0f0 4px); }
.tool { box-sizing: border-box; width: 26px; height: 26px; margin: 0 1px; display: flex; align-items: center; justify-content: center; border: 1px solid transparent; }
.tool.on { background: #f8f8f8; border-color: #a0a0a0 #fff #fff #a0a0a0; }
.tool.drop { width: 35px; justify-content: flex-start; padding-left: 2px; }
.tool.wide { width: auto; justify-content: flex-start; padding: 0 0 0 2px; }
.ico { width: 20px; height: 20px; flex: none; font-family: "Liberation Sans", Arial, sans-serif; }
.caret { border: 3px solid transparent; border-top-color: #000; border-bottom: 0; margin-left: 4px; }
.frame { color: #a8a8a8; font: 11px "Roboto", sans-serif; }
.far { margin-left: auto; display: flex; align-items: center; gap: 10px; padding-right: 2px; }
.far svg { height: 18px; width: auto; }

main { flex: 1; min-height: 0; display: flex; }
.watch { width: 257px; flex: none; display: flex; flex-direction: column; background: #f0f0f0; box-sizing: border-box; padding: 2px 2px 0 3px; }
.title { height: 17px; display: flex; align-items: center; justify-content: space-between; background: linear-gradient(90deg, #bfcddb, #d6e4f1 234px, #f0f0f0 234px); padding: 0 4px 0 2px; flex: none; }
.title button { display: flex; }
.title svg { width: 8px; height: 8px; }
.list { flex: 1; min-height: 0; display: flex; border-top: 1px solid #808080; border-left: 1px solid #808080; margin-right: 2px; }
table { width: 232px; height: 100%; border-collapse: collapse; table-layout: fixed; background: #fff; font-family: Roboto, sans-serif; font-size: 12px; line-height: 14px; }
thead tr { height: 28px; }
th { font-weight: 400; text-align: right; padding: 0 5px 0 0; border-right: 1px solid #dcdcdc; font-family: "Open Sans", sans-serif; }
td { text-align: right; padding: 0 3px 0 0; border: 1px solid #c4c4c4; border-left: 0; font-family: var(--narrow); }
tbody tr.u td { color: #0000ff; }
tbody tr.d td { color: #ff0000; }
.sym { text-align: left; }
th.sym { padding-left: 6px; width: 86px; }
tbody tr td.sym { color: #000; font-family: Roboto, sans-serif; }
.hot { background: #ffff00; }
.pink { background: #ffc0cb; }
.calm { background: #ffffe0; }
.dir { width: 11px; height: 12px; margin: 0 5px 0 4px; vertical-align: -3px; }
.scroll { flex: 1; display: flex; flex-direction: column; align-items: center; padding: 6px 2px 5px 0; }
.scroll svg { width: 9px; height: 8px; }
.thumb { width: 15px; height: 21px; margin-top: 5px; background: #cdcdcd; }
.scroll .end { margin-top: auto; }
.tabs { height: 5px; flex: none; border-top: 1px solid #000; display: flex; overflow: hidden; align-items: flex-start; padding-left: 3px; margin-right: 1px; }
.tabs button { padding: 0 9px; color: #808080; }
.tabs .act { background: #fff; color: #000; border: solid #000; border-width: 0 1px; }

.chart { flex: 1; min-width: 0; background: #000; border-left: 1px solid #696969; border-top: 1px solid #696969; padding: 3px 0 0 2px; display: flex; flex-direction: column; gap: 1px; color: #fff; --tahoma: "DejaVu Sans Condensed", "Noto Sans", sans-serif; }
.pane { display: flex; flex: none; }
.price { flex: 1; min-height: 0; }
.scanner { height: 71px; }
.trend { height: 81px; }
.cd { height: 35px; }
.tf { height: 67px; }
.plot { flex: 1; min-width: 0; position: relative; overflow: hidden; border: 1px solid #fff; }
.plot svg { display: block; }
.axis { width: 44px; flex: none; display: flex; flex-direction: column; justify-content: space-between; position: relative; font: 11px/12px var(--narrow); padding-top: 3px; box-sizing: border-box; }
.axis span { padding-left: 4px; white-space: nowrap; }
.price .axis { padding: 0; margin-top: -2px; margin-bottom: -3px; }
.axis b { position: absolute; left: 1px; top: 291px; width: 37px; padding-left: 3px; background: #fff; color: #000; font-weight: 400; }
.dates { display: flex; height: 25px; margin-top: -1px; font: 11px/14px var(--narrow); }
.dates span { width: 64px; flex: none; padding-top: 5px; white-space: nowrap; background: linear-gradient(#fff, #fff) 1px 0 / 1px 4px no-repeat; }

.ma { fill: none; stroke: #800080; stroke-width: 1; }
.trail { fill: none; stroke: #ff0000; stroke-width: 4; }
.plot text { white-space: pre; }
.tag { font: 11px "DejaVu Sans Condensed", sans-serif; }
.cap { font: 11px var(--narrow); fill: #fff; }
.news { font: 12px var(--narrow); }
.scan { font: 11px var(--tahoma); fill: #ffd700; }
.ratio { font: 700 24px var(--narrow); }
.pair { font: 700 20px "Liberation Sans", Arial, sans-serif; fill: #00ff00; }
.mono { font-family: "DejaVu Sans Mono", "Liberation Mono", monospace; }
.curve { fill: none; stroke-width: 1; }
.curve .thick { stroke-width: 2; }
.verdict { font: 22px var(--narrow); fill: #1e90ff; }
.verdict .quote { font-size: 19px; }
.sig { font: 700 12px var(--narrow); }
.sig .big { font-size: 19px; }

.stamp { position: absolute; box-sizing: border-box; border: 3px solid #ed1c24; background: #fff; color: #ed1c24; text-align: center; font: 700 19px/24px Lato, sans-serif; white-space: nowrap; }
.sell { left: 288px; top: 5px; width: 170px; }
.exit { left: 816px; top: 310px; width: 185px; font-size: 21px; }
.note { position: absolute; font-family: Lato, sans-serif; font-weight: 700; white-space: pre; }
.note p { margin: 0; }
.note span { text-decoration: underline; text-decoration-skip-ink: none; text-decoration-thickness: 2px; text-underline-offset: 2px; }
.entry { left: 231px; top: 134px; font-size: 18px; line-height: 26px; }
.contact { left: 227px; top: 273px; border: 1px solid #fff; padding: 4px 9px 2px 11px; font-size: 21px; line-height: 28px; }
.contact span { text-decoration: none; }
.works { left: 357px; top: 350px; border: 1px solid #fff; padding: 2px 8px 2px 7px; font-size: 18px; line-height: 26px; }
.scalping { left: 781px; top: 96px; font-size: 13px; line-height: 18px; }
.devices { left: 843px; top: 216px; font-size: 17px; line-height: 23px; }
.advance { left: 827px; top: 11px; font-size: 13px; line-height: 18px; text-align: center; }
.scalping span, .advance span { text-decoration-thickness: 1px; }
</style>
